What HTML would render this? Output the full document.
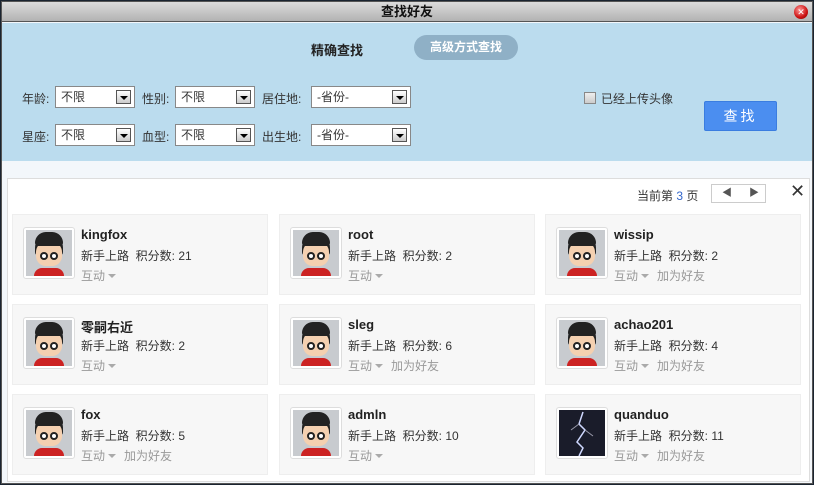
<!DOCTYPE html><html><head><meta charset="utf-8"><style>
*{margin:0;padding:0;box-sizing:border-box}
body{width:814px;height:485px;background:#1a2430;font-family:"Liberation Sans","Noto Sans CJK SC",sans-serif;font-size:12px;color:#333;position:relative;overflow:hidden}
.win{position:absolute;left:1px;top:1px;width:812px;height:483px;background:#f3f7fb;border:1px solid #555}
.title{height:20px;background:linear-gradient(#dcdcdc,#b2b2b2);border-bottom:1px solid #555;text-align:center;font-weight:bold;font-size:13px;line-height:20px;color:#111}
.close{position:absolute;right:4px;top:3px;width:14px;height:14px;border-radius:50%;background:radial-gradient(circle at 40% 35%,#f99,#c11 60%,#700);color:#fff;font-size:9px;line-height:14px;text-align:center}
.blue{position:absolute;left:0;top:21px;width:810px;height:138px;background:#bbdcee}
.abs{position:absolute}
.lbl{position:absolute;font-size:12px;color:#333}
.sel{position:absolute;height:22px;background:#fff;border:1px solid #888;font-size:12px;line-height:20px;padding-left:5px}
.sel i{position:absolute;right:3px;top:3px;width:15px;height:14px;border:1px solid #555;background:linear-gradient(#fff,#ccc)}
.sel i:after{content:"";position:absolute;left:3px;top:5px;border:4px solid transparent;border-top:4px solid #000}
.panel{position:absolute;left:5px;top:176px;width:803px;height:304px;background:#fff;border:1px solid #ddd}
.card{position:absolute;width:256px;height:81px;background:#f7f7f7;border:1px solid #eee}
.av{position:absolute;left:10px;top:12px;width:52px;height:52px;border:1px solid #ddd;border-radius:3px;background:#fff;padding:2px}
.av div{width:46px;height:46px;background:#c8cbcf;position:relative;overflow:hidden}
.hair{position:absolute;left:9px;top:4px;width:28px;height:22px;border-radius:14px 14px 4px 4px;background:#222}
.face{position:absolute;left:10px;top:12px;width:26px;height:24px;border-radius:10px;background:#f4d0b0}
.e1,.e2{position:absolute;top:22px;width:8px;height:8px;border-radius:50%;background:#fff;border:2px solid #222}
.e1{left:14px}.e2{left:24px}
.shirt{position:absolute;left:8px;top:38px;width:30px;height:12px;border-radius:8px 8px 0 0;background:#c22}
.nm{position:absolute;left:68px;top:12px;font-weight:bold;font-size:13px;color:#222}
.l2{position:absolute;left:68px;top:32px;font-size:12px;color:#333}
.l3{position:absolute;left:68px;top:52px;font-size:12px;color:#999}
.l3 b{display:inline-block;border:4px solid transparent;border-top:4px solid #aaa;vertical-align:-2px;margin:0 8px 0 3px}
</style></head><body>
<div class="win">
<div class="title">查找好友</div><div class="close">✕</div>
<div class="blue">
<div class="abs" style="left:309px;top:17px;font-weight:bold;font-size:13px;color:#222">精确查找</div>
<div class="abs" style="left:412px;top:12px;width:104px;height:25px;border-radius:13px;background:#8fb0c6;color:#fff;font-weight:bold;font-size:12px;text-align:center;line-height:25px">高级方式查找</div>
<div class="lbl" style="left:20px;top:67px">年龄:</div><div class="sel" style="left:53px;top:63px;width:80px">不限<i></i></div>
<div class="lbl" style="left:140px;top:67px">性别:</div><div class="sel" style="left:173px;top:63px;width:80px">不限<i></i></div>
<div class="lbl" style="left:260px;top:67px">居住地:</div><div class="sel" style="left:309px;top:63px;width:100px">-省份-<i></i></div>
<div class="lbl" style="left:20px;top:105px">星座:</div><div class="sel" style="left:53px;top:101px;width:80px">不限<i></i></div>
<div class="lbl" style="left:140px;top:105px">血型:</div><div class="sel" style="left:173px;top:101px;width:80px">不限<i></i></div>
<div class="lbl" style="left:260px;top:105px">出生地:</div><div class="sel" style="left:309px;top:101px;width:100px">-省份-<i></i></div>
<div class="abs" style="left:582px;top:69px;width:12px;height:12px;border:1px solid #888;background:linear-gradient(#eee,#ccc)"></div>
<div class="lbl" style="left:599px;top:67px">已经上传头像</div>
<div class="abs" style="left:702px;top:78px;width:73px;height:30px;background:#4b8ef0;border:1px solid #3a7de0;border-radius:2px;color:#fff;font-size:14px;text-align:center;line-height:28px;letter-spacing:3px">查找</div>
</div>
<div class="panel">
<div class="abs" style="left:629px;top:8px;font-size:12px">当前第 <span style="color:#36c">3</span> 页</div>
<div class="abs" style="left:703px;top:5px;width:55px;height:19px;border:1px solid #ccc;font-size:10px;color:#555;line-height:17px"><span style="position:absolute;left:10px">◀</span><span style="position:absolute;left:37px">▶</span></div>
<div class="abs" style="left:782px;top:2px;font-size:18px;color:#333">✕</div>
</div>
</div>
<div class="card" style="left:12px;top:214px"><div class="av"><div><i class="hair"></i><i class="face"></i><i class="hair" style="top:2px;height:14px"></i><i class="e1"></i><i class="e2"></i><i class="shirt"></i></div></div><div class="nm">kingfox</div><div class="l2">新手上路&nbsp; 积分数: 21</div><div class="l3">互动<b></b></div></div>
<div class="card" style="left:279px;top:214px"><div class="av"><div><i class="hair"></i><i class="face"></i><i class="hair" style="top:2px;height:14px"></i><i class="e1"></i><i class="e2"></i><i class="shirt"></i></div></div><div class="nm">root</div><div class="l2">新手上路&nbsp; 积分数: 2</div><div class="l3">互动<b></b></div></div>
<div class="card" style="left:545px;top:214px"><div class="av"><div><i class="hair"></i><i class="face"></i><i class="hair" style="top:2px;height:14px"></i><i class="e1"></i><i class="e2"></i><i class="shirt"></i></div></div><div class="nm">wissip</div><div class="l2">新手上路&nbsp; 积分数: 2</div><div class="l3">互动<b></b>加为好友</div></div>
<div class="card" style="left:12px;top:304px"><div class="av"><div><i class="hair"></i><i class="face"></i><i class="hair" style="top:2px;height:14px"></i><i class="e1"></i><i class="e2"></i><i class="shirt"></i></div></div><div class="nm">零嗣右近</div><div class="l2">新手上路&nbsp; 积分数: 2</div><div class="l3">互动<b></b></div></div>
<div class="card" style="left:279px;top:304px"><div class="av"><div><i class="hair"></i><i class="face"></i><i class="hair" style="top:2px;height:14px"></i><i class="e1"></i><i class="e2"></i><i class="shirt"></i></div></div><div class="nm">sleg</div><div class="l2">新手上路&nbsp; 积分数: 6</div><div class="l3">互动<b></b>加为好友</div></div>
<div class="card" style="left:545px;top:304px"><div class="av"><div><i class="hair"></i><i class="face"></i><i class="hair" style="top:2px;height:14px"></i><i class="e1"></i><i class="e2"></i><i class="shirt"></i></div></div><div class="nm">achao201</div><div class="l2">新手上路&nbsp; 积分数: 4</div><div class="l3">互动<b></b>加为好友</div></div>
<div class="card" style="left:12px;top:394px"><div class="av"><div><i class="hair"></i><i class="face"></i><i class="hair" style="top:2px;height:14px"></i><i class="e1"></i><i class="e2"></i><i class="shirt"></i></div></div><div class="nm">fox</div><div class="l2">新手上路&nbsp; 积分数: 5</div><div class="l3">互动<b></b>加为好友</div></div>
<div class="card" style="left:279px;top:394px"><div class="av"><div><i class="hair"></i><i class="face"></i><i class="hair" style="top:2px;height:14px"></i><i class="e1"></i><i class="e2"></i><i class="shirt"></i></div></div><div class="nm">admln</div><div class="l2">新手上路&nbsp; 积分数: 10</div><div class="l3">互动<b></b></div></div>
<div class="card" style="left:545px;top:394px"><div class="av"><div style="background:#1a1c2a"><svg width="46" height="46"><path d="M24 2 L20 14 L26 20 L18 32 L24 38 L20 46" stroke="#cfd8ff" stroke-width="1.5" fill="none"/><path d="M20 14 L12 20 M26 20 L34 26" stroke="#99a" stroke-width="1" fill="none"/></svg></div></div><div class="nm">quanduo</div><div class="l2">新手上路&nbsp; 积分数: 11</div><div class="l3">互动<b></b>加为好友</div></div>
</body></html>
